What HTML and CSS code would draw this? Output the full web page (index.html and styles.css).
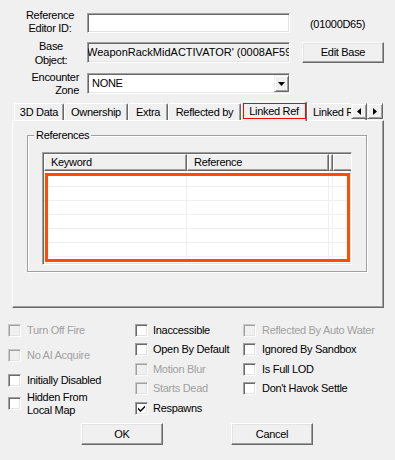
FILE: index.html
```html
<!DOCTYPE html>
<html>
<head>
<meta charset="utf-8">
<link rel="stylesheet" href="styles.css">
</head>
<body>
<div class="dlg">
  <div class="row r1">
    <div class="lbl lbl1">Reference<br>Editor ID:</div>
    <div class="field"></div>
    <div class="formid">(01000D65)</div>
  </div>
  <div class="row r2">
    <div class="lbl lbl2">Base<br>Object:</div>
    <div class="field ro"><span class="rotext">WeaponRackMidACTIVATOR' (0008AF59)</span></div>
    <div class="btn editbase">Edit Base</div>
  </div>
  <div class="row r3">
    <div class="lbl lbl3">Encounter<br>Zone</div>
    <div class="field combo">
      <span class="combotext">NONE</span>
      <span class="drop"><svg width="7" height="4" viewBox="0 0 7 4"><path d="M0 0H7L3.5 4Z" fill="#000"/></svg></span>
    </div>
  </div>

  <div class="tabs">
    <div class="tab t1">3D Data</div>
    <div class="tab t2">Ownership</div>
    <div class="tab t3">Extra</div>
    <div class="tab t4">Reflected by</div>
    <div class="tab sel"><span class="focus">Linked Ref</span></div>
    <div class="tab t6">Linked Ref By</div>
    <div class="scroll">
      <div class="sbtn"><svg width="4" height="7" viewBox="0 0 4 7"><path d="M4 0V7L0 3.5Z" fill="#000"/></svg></div>
      <div class="sbtn"><svg width="4" height="7" viewBox="0 0 4 7"><path d="M0 0V7L4 3.5Z" fill="#000"/></svg></div>
    </div>
  </div>

  <div class="panel">
    <div class="group">
      <span class="legend">References</span>
      <div class="list">
        <div class="hdr">
          <div class="hc kw">Keyword</div>
          <div class="hc ref">Reference</div>
          <div class="hc sm"></div>
          <div class="hc rest"></div>
        </div>
        <div class="lbody">
          <div class="col ckw"></div>
          <div class="col cref"></div>
          <div class="col csm"></div>
          <div class="col crest"></div>
        </div>
        <div class="hl"></div>
      </div>
    </div>
  </div>

  <div class="checks">
    <div class="ccol c1">
      <div class="chk dis"><span class="box"></span><span>Turn Off Fire</span></div>
      <div class="chk dis"><span class="box"></span><span>No AI Acquire</span></div>
      <div class="chk"><span class="box"></span><span>Initially Disabled</span></div>
      <div class="chk two"><span class="box"></span><span>Hidden From<br>Local Map</span></div>
    </div>
    <div class="ccol c2">
      <div class="chk"><span class="box"></span><span>Inaccessible</span></div>
      <div class="chk"><span class="box"></span><span>Open By Default</span></div>
      <div class="chk dis"><span class="box"></span><span>Motion Blur</span></div>
      <div class="chk dis"><span class="box"></span><span>Starts Dead</span></div>
      <div class="chk"><span class="box"><svg width="9" height="9" viewBox="0 0 9 9"><path d="M1 3.5L3.5 6L8 1.5V3.5L3.5 8L1 5.5Z" fill="#000"/></svg></span><span>Respawns</span></div>
    </div>
    <div class="ccol c3">
      <div class="chk dis"><span class="box"></span><span>Reflected By Auto Water</span></div>
      <div class="chk"><span class="box"></span><span>Ignored By Sandbox</span></div>
      <div class="chk"><span class="box"></span><span>Is Full LOD</span></div>
      <div class="chk"><span class="box"></span><span>Don't Havok Settle</span></div>
    </div>
  </div>

  <div class="buttons">
    <div class="btn okb">OK</div>
    <div class="btn cancelb">Cancel</div>
  </div>
</div>
</body>
</html>
```

FILE: styles.css
```css
* { box-sizing: border-box; }
html, body { margin: 0; padding: 0; background: #f0f0f0; }
body {
  font-family: "Liberation Sans", Arial, sans-serif;
  font-size: 11px;
  line-height: 13px;
  letter-spacing: -0.3px;
  color: #000;
}
.dlg { width: 395px; height: 460px; overflow: hidden; }

.row { display: flex; align-items: center; }
.r1 { margin-top: 13px; height: 20px; }
.r2 { margin-top: 9px; height: 21px; }
.r3 { margin-top: 10px; height: 21px; }

.lbl { width: 87px; flex-shrink: 0; align-self: flex-start; }
.lbl1 { margin-top: -4px; padding-left: 20px; padding-right: 7px; text-align: center; }
.lbl2 { margin-top: -3px; padding-left: 20px; padding-right: 5px; text-align: center; line-height: 14px; }
.lbl3 { margin-top: -2px; padding-right: 8px; text-align: right; }

.field {
  width: 203px; height: 100%;
  background: #fff;
  border: 1px solid; border-color: #a0a0a0 #fff #fff #a0a0a0;
  box-shadow: inset 1px 1px 0 #696969, inset -1px -1px 0 #e3e3e3;
  flex-shrink: 0;
  display: flex; align-items: center;
  overflow: hidden;
  white-space: nowrap;
}
.ro { background: #f0f0f0; }
.rotext { letter-spacing: 0; margin-left: -1px; }
.formid { margin-left: 20px; margin-top: 2px; }

.btn {
  display: flex; align-items: center; justify-content: center;
  width: 82px; height: 22px;
  background: #f0f0f0;
  border: 1px solid; border-color: #fff #696969 #696969 #fff;
  box-shadow: inset -1px -1px 0 #a0a0a0, inset 1px 1px 0 #e3e3e3;
}
.editbase { margin-left: 12px; height: 21px; }

.combo { justify-content: space-between; }
.combotext { padding-left: 4px; }
.drop {
  width: 15px; height: 17px; margin-right: 0;
  background: #f0f0f0;
  border: 1px solid; border-color: #f0f0f0 #696969 #696969 #f0f0f0;
  box-shadow: inset 1px 1px 0 #fff, inset -1px -1px 0 #a0a0a0;
  display: flex; align-items: center; justify-content: center;
}
.drop svg { display: block; }

.tabs {
  position: relative; z-index: 2;
  margin: 7px 0 0 12px; width: 372px; height: 19px;
  display: flex; align-items: flex-end;
  white-space: nowrap;
}
.tab {
  height: 17px;
  border: 1px solid; border-bottom: none;
  border-color: #fff #696969 transparent #fff;
  box-shadow: inset -1px 0 0 #a0a0a0;
  border-radius: 2px 2px 0 0;
  display: flex; align-items: center; justify-content: center;
  padding-top: 1px;
  background: #f0f0f0;
  flex-shrink: 0;
  overflow: hidden;
}
.t1 { margin-left: 2px; width: 50px; }
.t2 { width: 64px; }
.t3 { width: 40px; }
.t4 { width: 73px; }
.sel { width: 66px; height: 20px; margin-bottom: -1px; padding-top: 0; align-items: flex-start; }
.focus {
  display: block;
  margin-top: 1px; margin-left: 0;
  width: 63px; height: 16px;
  border: 1px solid #ff0000;
  text-align: center; line-height: 14px;
}
.t6 { width: 60px; justify-content: flex-start; padding-left: 5px; }

.scroll {
  position: absolute; left: 339px; top: 2px;
  display: flex;
}
.sbtn {
  width: 16px; height: 16px;
  background: #f0f0f0;
  border: 1px solid; border-color: #f0f0f0 #696969 #696969 #f0f0f0;
  box-shadow: inset 1px 1px 0 #fff, inset -1px -1px 0 #a0a0a0;
  display: flex; align-items: center; justify-content: center;
}
.sbtn svg { display: block; }

.panel {
  position: relative; z-index: 1;
  margin-left: 12px; width: 372px; height: 188px;
  border: 1px solid; border-color: #fff #696969 #696969 #fff;
  box-shadow: inset -1px -1px 0 #a0a0a0;
  padding: 14px 0 0 14px;
}
.group {
  position: relative;
  width: 340px; height: 137px;
  border: 1px solid #a0a0a0;
  box-shadow: inset 1px 1px 0 #fff, 1px 1px 0 #fff;
  padding: 16px 0 0 14px;
}
.legend {
  position: absolute; left: 6px; top: -7px;
  padding: 0 2px; background: #f0f0f0;
}
.list {
  position: relative;
  width: 310px; height: 113px;
  background: #fff;
  border: 1px solid; border-color: #a0a0a0 #fff #fff #a0a0a0;
  box-shadow: inset 1px 1px 0 #696969, inset -1px -1px 0 #e3e3e3;
  padding: 1px 0 0 1px;
  overflow: hidden;
  display: flex; flex-direction: column;
}
.hdr { display: flex; height: 17px; flex-shrink: 0; }
.hc {
  height: 17px;
  background: #f0f0f0;
  border: 1px solid; border-color: #fff #696969 #696969 #fff;
  box-shadow: inset -1px -1px 0 #a0a0a0;
  padding-left: 6px;
  display: flex; align-items: center;
  flex-shrink: 0;
}
.kw { width: 143px; }
.ref { width: 142px; }
.sm { width: 4px; padding: 0; }
.rest { width: 30px; }
.lbody {
  flex: 1; display: flex;
  background: repeating-linear-gradient(to bottom, transparent 0 13px, #f0f0f0 13px 14px);
  background-position: 0 2px;
}
.col { border-right: 1px solid #f0f0f0; flex-shrink: 0; }
.ckw { width: 143px; }
.cref { width: 142px; }
.csm { width: 4px; }
.crest { width: 30px; border-right: none; }
.hl {
  position: absolute; left: 2px; top: 20px;
  width: 305px; height: 89px;
  border: 3px solid #ff4e00;
}

.checks {
  height: 115px;
  display: grid; grid-template-columns: 127px 108px 1fr;
  padding-left: 8px;
}
.ccol { display: flex; flex-direction: column; }
.c1 { padding-top: 9.5px; }
.c2, .c3 { padding-top: 12.25px; }
.chk { display: flex; align-items: center; white-space: nowrap; }
.c1 .chk { height: 25px; gap: 6px; }
.c1 .chk.two { height: 22px; margin-top: 0; }
.c2 .chk { height: 19.5px; gap: 5px; }
.c3 .chk { height: 19.5px; gap: 6px; }
.box {
  width: 13px; height: 13px; flex-shrink: 0;
  background: #fff;
  border: 1px solid; border-color: #a0a0a0 #fff #fff #a0a0a0;
  box-shadow: inset 1px 1px 0 #696969, inset -1px -1px 0 #e3e3e3;
  display: flex; align-items: center; justify-content: center;
}
.box svg { display: block; }
.dis { color: #a0a0a0; }
.dis .box {
  background: #f0f0f0;
  border-color: #c8c8c8 #fff #fff #c8c8c8;
  box-shadow: inset 1px 1px 0 #a0a0a0, inset -1px -1px 0 #e3e3e3;
}

.buttons { display: flex; padding-left: 81px; gap: 68px; }
```
